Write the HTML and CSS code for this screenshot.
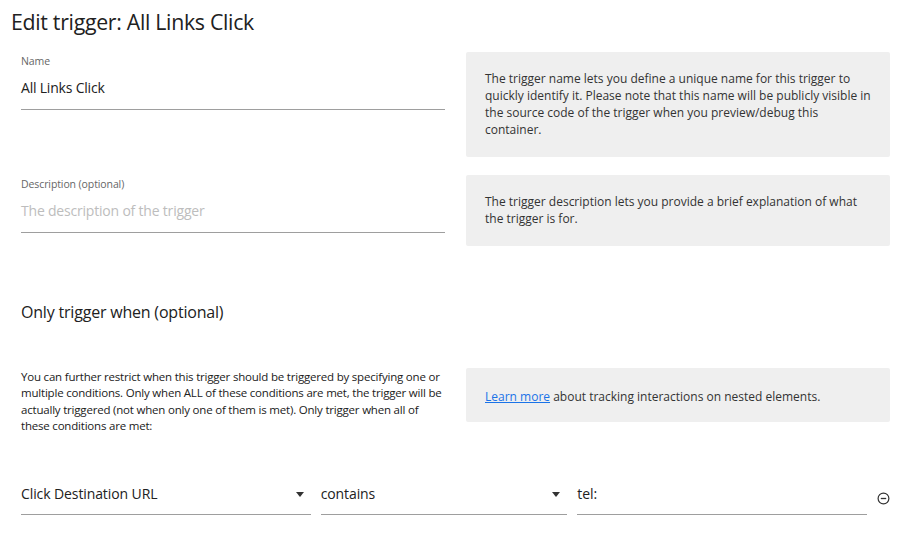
FILE: index.html
```html
<!DOCTYPE html>
<html>
<head>
<meta charset="utf-8">
<link rel="stylesheet" href="styles.css">
</head>
<body>
<h1 class="title">Edit trigger: All Links Click</h1>
<div class="content">
  <div class="row row-name">
    <div class="field">
      <div class="label">Name</div>
      <div class="input">All Links Click</div>
    </div>
    <div class="help">The trigger name lets you define a unique name for this trigger to quickly identify it. Please note that this name will be publicly visible in the source code of the trigger when you preview/debug this container.</div>
  </div>
  <div class="row row-desc">
    <div class="field">
      <div class="label">Description (optional)</div>
      <div class="input placeholder">The description of the trigger</div>
    </div>
    <div class="help">The trigger description lets you provide a brief explanation of what the trigger is for.</div>
  </div>
  <h2 class="section">Only trigger when (optional)</h2>
  <div class="row row-cond">
    <p class="explain">You can further restrict when this trigger should be triggered by specifying one or multiple conditions. Only when ALL of these conditions are met, the trigger will be actually triggered (not when only one of them is met). Only trigger when all of these conditions are met:</p>
    <div class="help help-link"><a href="#" class="link">Learn more</a> about tracking interactions on nested elements.</div>
  </div>
  <div class="condition">
    <div class="select sel-var"><span>Click Destination URL</span><span class="caret"></span></div>
    <div class="select sel-op"><span>contains</span><span class="caret"></span></div>
    <div class="select sel-val"><span>tel:</span></div>
    <svg class="remove" width="13" height="13" viewBox="0 0 13 13"><circle cx="6.5" cy="6.5" r="5.4" fill="none" stroke="#333" stroke-width="1.2"/><line x1="3.8" y1="6.5" x2="9.2" y2="6.5" stroke="#333" stroke-width="1.3"/></svg>
  </div>
</div>
</body>
</html>
```
FILE: styles.css
```css
* { box-sizing: border-box; }
body {
  margin: 0;
  font-family: "Open Sans", "Noto Sans", sans-serif;
  color: #212121;
  background: #fff;
}
.title {
  margin: 0;
  padding: 8px 0 0 11px;
  font-size: 21.3px;
  font-weight: 400;
  line-height: 28px;
  color: #212121;
  letter-spacing: -0.3px;
}
.content {
  padding: 16px 18px 0 21px;
}
.row {
  display: grid;
  grid-template-columns: 424px 424px;
  column-gap: 21px;
  align-items: start;
}
.row-desc { margin-top: 18px; }
.field { padding-top: 2px; }
.label {
  font-size: 10.5px;
  line-height: 14px;
  color: #666;
  letter-spacing: -0.1px;
}
.input {
  font-size: 14px;
  line-height: 20px;
  padding: 10px 0 11px;
  border-bottom: 1px solid #9e9e9e;
  letter-spacing: -0.2px;
}
.placeholder { color: #bdbdbd; }
.help {
  background: #efefef;
  border-radius: 2px;
  padding: 18px 19px 19px;
  font-size: 12px;
  line-height: 17px;
  color: #333;
  letter-spacing: 0;
}
.section {
  margin: 55px 0 0;
  font-size: 16px;
  font-weight: 400;
  line-height: 22px;
  color: #212121;
  letter-spacing: -0.2px;
}
.row-cond { margin-top: 45px; }
.explain {
  margin: 0;
  padding-top: 1px;
  font-size: 11.5px;
  line-height: 16.3px;
  color: #212121;
  letter-spacing: -0.2px;
}
.help-link { padding: 20px 19px 17px; }
.link { color: #1a73e8; text-decoration: underline; }
.condition {
  display: flex;
  align-items: flex-end;
  margin-top: 50px;
}
.select {
  display: flex;
  justify-content: space-between;
  align-items: center;
  font-size: 14px;
  line-height: 20px;
  padding: 0 0 10px;
  border-bottom: 1px solid #9e9e9e;
  letter-spacing: -0.1px;
}
.sel-var { width: 290px; margin-right: 10px; }
.sel-op { width: 247px; margin-right: 10px; }
.sel-val { width: 290px; }
.caret {
  width: 0; height: 0;
  border-left: 4.5px solid transparent;
  border-right: 4.5px solid transparent;
  border-top: 5px solid #333;
  margin-right: 7px;
}
.remove { margin-left: 10px; margin-bottom: 10px; }
```
